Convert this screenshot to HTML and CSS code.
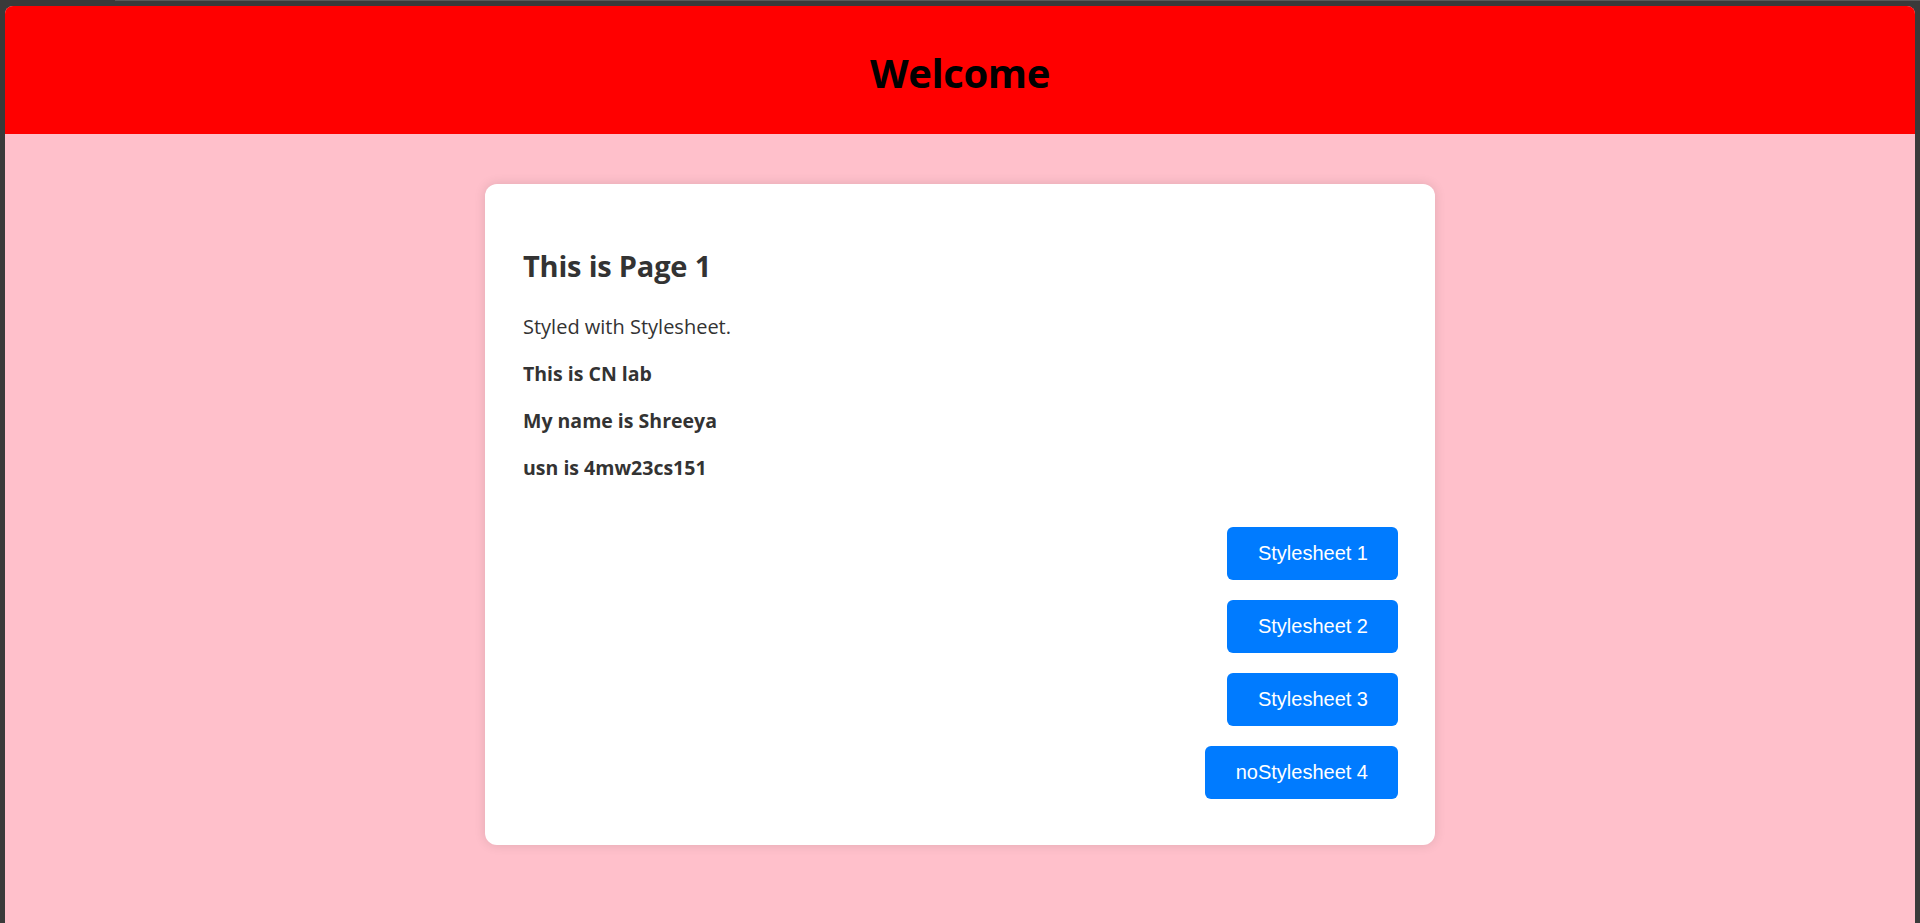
FILE: index.html
```html
<!DOCTYPE html>
<html lang="en">
<head>
<meta charset="utf-8">
<title>Page 1</title>
<link rel="stylesheet" href="styles.css">
</head>
<body>
<div class="topline"></div>
<div class="window">
  <header class="header">
    <h1>Welcome</h1>
  </header>
  <main class="main">
    <section class="card">
      <h2>This is Page 1</h2>
      <p>Styled with Stylesheet.</p>
      <p class="bold">This is CN lab</p>
      <p class="bold">My name is Shreeya</p>
      <p class="bold">usn is 4mw23cs151</p>
      <div class="buttons">
        <button class="btn">Stylesheet 1</button>
        <button class="btn">Stylesheet 2</button>
        <button class="btn">Stylesheet 3</button>
        <button class="btn">noStylesheet 4</button>
      </div>
    </section>
  </main>
</div>
</body>
</html>
```

FILE: styles.css
```css
html, body {
  margin: 0;
  padding: 0;
  height: 100%;
  overflow: hidden;
}
body {
  background: #3a3a3a;
  font-family: "Open Sans", "Noto Sans", sans-serif;
}
.topline {
  height: 1px;
  margin-left: 115px;
  background: #5a5a5a;
  margin-bottom: 5px;
}
.window {
  margin: 0 5px;
  height: 917px;
  background: #ffc0cb;
  border-radius: 8px 8px 0 0;
  overflow: hidden;
}
.header {
  height: 128px;
  box-sizing: border-box;
  padding-top: 6px;
  background: #ff0000;
  display: flex;
  align-items: center;
  justify-content: center;
}
.header h1 {
  margin: 0;
  font-size: 40px;
  font-weight: 700;
  color: #000;
  line-height: 1;
  letter-spacing: -0.4px;
}
.main {
  padding-top: 50px;
}
.card {
  box-sizing: border-box;
  width: 950px;
  margin: 0 auto;
  background: #fff;
  border-radius: 12px;
  padding: 37px 37px 46px 38px;
  box-shadow: 0 0 12px rgba(0, 0, 0, 0.12);
  color: #333;
  display: flow-root;
}
.card h2 {
  font-size: 29px;
  line-height: 40px;
  margin: 25px 0 27px;
  font-weight: 700;
  letter-spacing: -0.2px;
}
.card p {
  font-size: 20px;
  line-height: 27px;
  margin: 20px 0;
}
.card p.bold {
  font-weight: 700;
  font-size: 19.5px;
}
.buttons {
  margin-top: 46px;
  display: flex;
  flex-direction: column;
  align-items: flex-end;
  gap: 20px;
}
.btn {
  font-family: "Liberation Sans", Arial, sans-serif;
  font-size: 20px;
  line-height: 23px;
  padding: 15px 30px 15px 31px;
  border: none;
  border-radius: 6px;
  background: #007bff;
  color: #fff;
  cursor: pointer;
}
```
